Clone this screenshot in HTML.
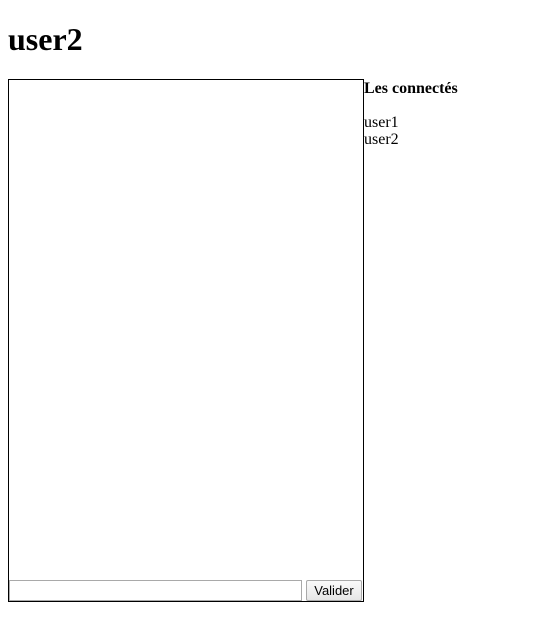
<!DOCTYPE html>
<html><head><style>
body{margin:8px;font-family:"Liberation Serif",serif;font-size:16px;background:#fff;color:#000}
h1{font-size:32px;margin:0;position:absolute;left:8px;top:21px;line-height:37px}
#box{position:absolute;left:8px;top:79px;width:354px;height:521px;border:1px solid #000}
#inp{position:absolute;left:0;top:500px;width:291px;height:19px;border:1px solid #a9a9a9;padding:0;margin:0;box-sizing:content-box}
#btn{position:absolute;left:297px;top:500px;width:56px;height:21px;border:1px solid #a9a9a9;border-radius:2px;background:linear-gradient(#fafafa,#e6e6e6);font-family:"Liberation Sans",sans-serif;font-size:13px;padding:0;box-sizing:border-box;line-height:19px;text-align:center}
#side{position:absolute;left:364px;top:79px}
h4{margin:0;font-size:16px;line-height:19px}
.u{line-height:17px}
</style></head><body>
<h1>user2</h1>
<div id="box"><input id="inp"><div id="btn">Valider</div></div>
<div id="side"><h4>Les connectés</h4><div style="height:16px"></div><div class="u">user1</div><div class="u">user2</div></div>
</body></html>
